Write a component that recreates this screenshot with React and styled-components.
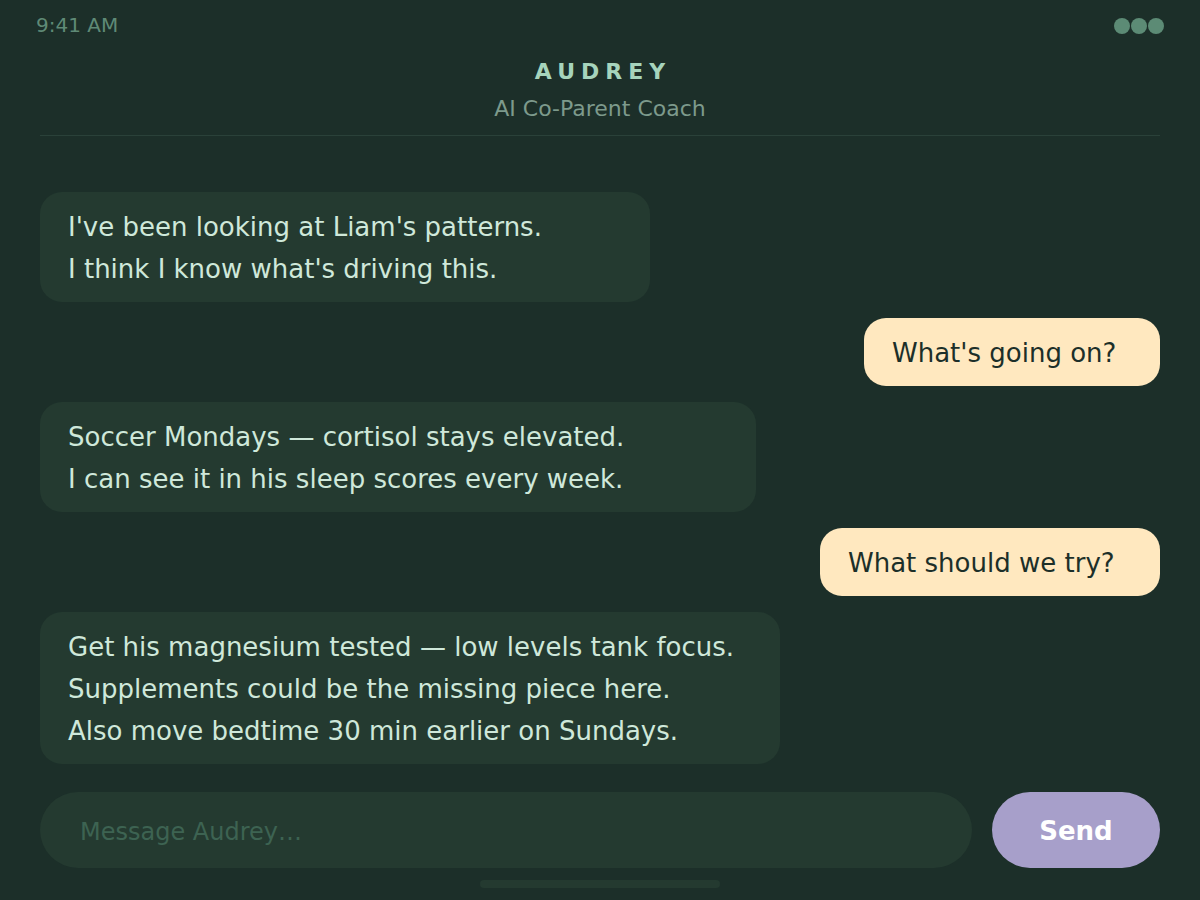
import React from "react";
import styled, { createGlobalStyle } from "styled-components";

const GlobalStyle = createGlobalStyle`
  html, body {
    margin: 0;
    padding: 0;
    background: #1c2f29;
  }
  body {
    font-family: "DejaVu Sans", "Liberation Sans", sans-serif;
  }
  * {
    box-sizing: border-box;
  }
`;

const Screen = styled.div`
  width: 1200px;
  height: 900px;
  background: #1c2f29;
  display: flex;
  flex-direction: column;
  overflow: hidden;
`;

const StatusBar = styled.div`
  height: 50px;
  padding: 0 36px;
  display: flex;
  align-items: center;
  justify-content: space-between;
`;

const Clock = styled.span`
  font-size: 20px;
  color: #5f8a76;
`;

const Dots = styled.div`
  display: flex;
  gap: 1px;
  margin-top: 2px;
`;

const Dot = styled.span`
  width: 16px;
  height: 16px;
  border-radius: 50%;
  background: #5c8b75;
`;

const Header = styled.header`
  margin: 0 40px;
  padding: 8px 0 12px;
  border-bottom: 1px solid #2a4139;
  display: flex;
  flex-direction: column;
  align-items: center;
`;

const Title = styled.h1`
  margin: 0;
  padding-left: 6px;
  font-size: 22px;
  line-height: 28px;
  font-weight: 700;
  letter-spacing: 6px;
  color: #a6d4bc;
`;

const Subtitle = styled.div`
  margin-top: 9px;
  font-size: 22px;
  line-height: 28px;
  color: #7d9a8c;
`;

const Thread = styled.div`
  margin: 56px 40px 0;
  display: flex;
  flex-direction: column;
  gap: 16px;
`;

const Bubble = styled.div`
  width: ${(p) => p.$width}px;
  align-self: ${(p) => (p.$mine ? "flex-end" : "flex-start")};
  padding: 14px 28px 12px;
  border-radius: 22px;
  background: ${(p) => (p.$mine ? "#ffe8bf" : "#243a30")};
  color: ${(p) => (p.$mine ? "#1c2f29" : "#cfe8da")};
  font-size: 26px;
  line-height: 42px;
  white-space: nowrap;
`;

const Composer = styled.form`
  margin: 28px 40px 0;
  display: flex;
  gap: 20px;
  height: 76px;
`;

const Input = styled.input`
  flex: 1;
  height: 100%;
  border: none;
  outline: none;
  border-radius: 38px;
  background: #243a30;
  padding: 3px 40px 0;
  font-family: inherit;
  font-size: 24px;
  color: #cfe8da;

  &::placeholder {
    color: #3d6352;
  }
`;

const SendButton = styled.button`
  width: 168px;
  height: 100%;
  border: none;
  border-radius: 38px;
  background: #a79fca;
  color: #ffffff;
  font-family: inherit;
  font-size: 26px;
  font-weight: 700;
  padding-top: 2px;
  cursor: pointer;
`;

const HomeIndicator = styled.div`
  align-self: center;
  margin-top: 12px;
  width: 240px;
  height: 8px;
  border-radius: 4px;
  background: #243a30;
`;

const messages = [
  {
    mine: false,
    width: 610,
    lines: ["I've been looking at Liam's patterns.", "I think I know what's driving this."],
  },
  { mine: true, width: 296, lines: ["What's going on?"] },
  {
    mine: false,
    width: 716,
    lines: ["Soccer Mondays — cortisol stays elevated.", "I can see it in his sleep scores every week."],
  },
  { mine: true, width: 340, lines: ["What should we try?"] },
  {
    mine: false,
    width: 740,
    lines: [
      "Get his magnesium tested — low levels tank focus.",
      "Supplements could be the missing piece here.",
      "Also move bedtime 30 min earlier on Sundays.",
    ],
  },
];

export default function App() {
  return (
    <Screen>
      <GlobalStyle />
      <StatusBar>
        <Clock>9:41 AM</Clock>
        <Dots>
          <Dot />
          <Dot />
          <Dot />
        </Dots>
      </StatusBar>

      <Header>
        <Title>AUDREY</Title>
        <Subtitle>AI Co-Parent Coach</Subtitle>
      </Header>

      <Thread>
        {messages.map((m, i) => (
          <Bubble key={i} $mine={m.mine} $width={m.width}>
            {m.lines.map((line, j) => (
              <div key={j}>{line}</div>
            ))}
          </Bubble>
        ))}
      </Thread>

      <Composer onSubmit={(e) => e.preventDefault()}>
        <Input placeholder="Message Audrey…" />
        <SendButton type="submit">Send</SendButton>
      </Composer>

      <HomeIndicator />
    </Screen>
  );
}
